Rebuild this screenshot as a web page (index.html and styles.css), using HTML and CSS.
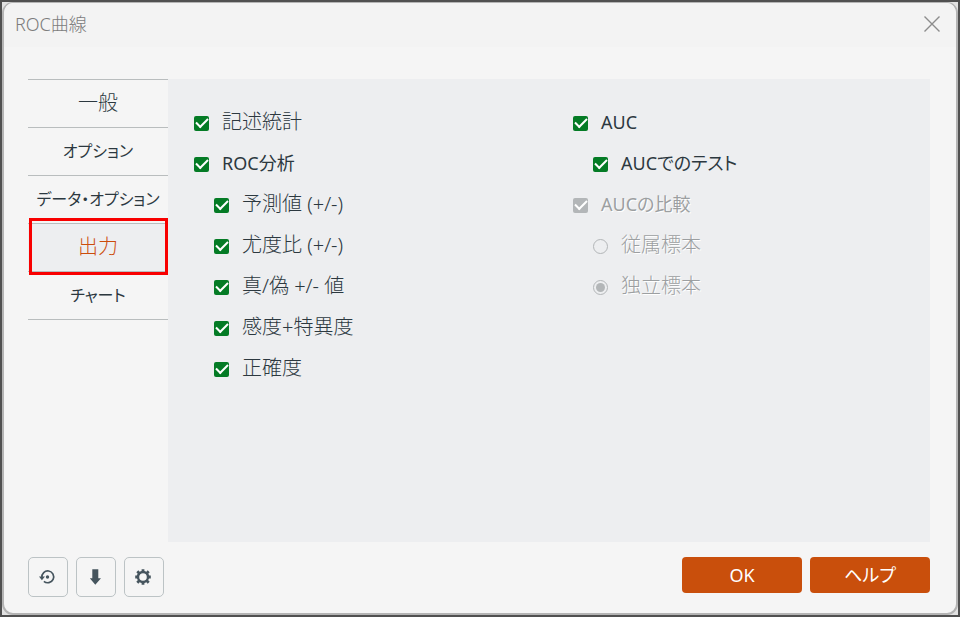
FILE: index.html
```html
<!DOCTYPE html>
<html lang="ja">
<head>
  <meta charset="UTF-8">
  <title>ROC曲線</title>
  <link rel="stylesheet" href="styles.css">
</head>
<body>
  <div class="dialog">
    <header class="titlebar">
      <h1>ROC曲線</h1>
      <button class="close" aria-label="閉じる">
        <svg width="16" height="16" viewBox="0 0 16 16"><path d="M0.5 0.5L15.5 15.5M15.5 0.5L0.5 15.5" stroke="#8c8c8c" stroke-width="1.4"/></svg>
      </button>
    </header>

    <main class="content">
      <nav class="tabs">
        <button class="tab">一般</button>
        <button class="tab kana">オプション</button>
        <button class="tab kana">データ・オプション</button>
        <button class="tab active">出力</button>
        <button class="tab kana">チャート</button>
      </nav>

      <section class="panel">
        <div class="column">
          <label class="option"><input type="checkbox" checked><span>記述統計</span></label>
          <label class="option mixed"><input type="checkbox" checked><span>ROC分析</span></label>
          <label class="option sub"><input type="checkbox" checked><span>予測値 (+/-)</span></label>
          <label class="option sub"><input type="checkbox" checked><span>尤度比 (+/-)</span></label>
          <label class="option sub"><input type="checkbox" checked><span>真/偽 +/- 値</span></label>
          <label class="option sub"><input type="checkbox" checked><span>感度+特異度</span></label>
          <label class="option sub"><input type="checkbox" checked><span>正確度</span></label>
        </div>
        <div class="column">
          <label class="option mixed"><input type="checkbox" checked><span>AUC</span></label>
          <label class="option mixed sub"><input type="checkbox" checked><span>AUCでのテスト</span></label>
          <label class="option mixed disabled"><input type="checkbox" checked disabled><span>AUCの比較</span></label>
          <label class="option sub disabled"><input type="radio" name="sample" disabled><span>従属標本</span></label>
          <label class="option sub disabled"><input type="radio" name="sample" checked disabled><span>独立標本</span></label>
        </div>
      </section>
    </main>

    <footer class="footer">
      <div class="tools">
        <button class="tool" aria-label="リセット">
          <svg width="18" height="18" viewBox="0 0 18 18">
            <path d="M2.9 9.5A5.9 5.9 0 1 1 4.9 13.3" fill="none" stroke="#46555e" stroke-width="1.7"/>
            <path d="M0 8.6H6L2.9 12.2Z" fill="#46555e"/>
            <circle cx="8.5" cy="9" r="1.7" fill="#46555e"/>
          </svg>
        </button>
        <button class="tool" aria-label="保存">
          <svg width="18" height="18" viewBox="0 0 18 18"><path d="M5.3 1.3H11.3V10.3H14L8.3 16.8L2.8 10.3H5.3Z" fill="#46555e"/></svg>
        </button>
        <button class="tool" aria-label="設定">
          <svg width="18" height="18" viewBox="0 0 18 18">
            <circle cx="8" cy="9" r="5" fill="none" stroke="#46555e" stroke-width="2.4"/>
            <path d="M8 1.2V4M8 14V16.8M0.2 9H3M13 9H15.8M2.3 3.3L4.4 5.4M11.6 12.6L13.7 14.7M2.3 14.7L4.4 12.6M11.6 5.4L13.7 3.3" stroke="#46555e" stroke-width="2.8"/>
          </svg>
        </button>
      </div>
      <div class="actions">
        <button class="action">OK</button>
        <button class="action">ヘルプ</button>
      </div>
    </footer>
  </div>
</body>
</html>
```

FILE: styles.css
```css
* {
  box-sizing: border-box;
}

body {
  margin: 0;
  min-height: 100vh;
  display: flex;
  border: 2px solid #505050;
  background: #e2e2e2;
  color: #2c383f;
  font-family: "Noto Sans", "Noto Sans CJK JP", sans-serif;
  font-weight: 300;
  font-feature-settings: "palt";
}

button {
  padding: 0;
  border: none;
  background: none;
  color: inherit;
  font: inherit;
  font-feature-settings: inherit;
}

svg {
  display: block;
}

.dialog {
  flex: 1;
  display: flex;
  flex-direction: column;
  border: 1px solid #b4b4b4;
  border-width: 1px 2px 2px;
  border-radius: 11px;
  background: #f5f5f5;
  overflow: hidden;
}

.titlebar {
  height: 44px;
  padding: 0 16px 2px 11px;
  display: flex;
  align-items: center;
  justify-content: space-between;
  background: #f3f3f3;
}

.titlebar h1 {
  margin: 0;
  font-size: 18px;
  font-weight: inherit;
  line-height: 24px;
  color: #7c7c7c;
}

.content {
  flex: 1;
  display: flex;
  padding: 32px 26px 0 24px;
}

.tabs {
  width: 140px;
  display: flex;
  flex-direction: column;
}

.tab {
  position: relative;
  height: 48px;
  padding-bottom: 2px;
  border-top: 1px solid #b9bdbe;
  font-size: 20px;
  line-height: 24px;
}

.tab:last-child {
  height: 49px;
  border-bottom: 1px solid #b9bdbe;
}

.tab.kana {
  font-size: 16px;
  font-weight: 400;
}

.tab.active {
  background: #edeef0;
  color: #cc4c0c;
}

/* red frame around the current tab */
.tab.active::after {
  content: "";
  position: absolute;
  z-index: 1;
  inset: -6px 0 -4px 1px;
  border: 3px solid #f80000;
}

.panel {
  flex: 1;
  display: grid;
  grid-template-columns: 1fr 1fr;
  align-items: start;
  padding: 23px 0 0 26px;
  background: #edeef0;
}

.column {
  display: flex;
  flex-direction: column;
}

.column + .column {
  padding-left: 11px;
}

.option {
  height: 41px;
  display: flex;
  align-items: center;
  gap: 13px;
  font-size: 20px;
  line-height: 24px;
}

.option span {
  padding-bottom: 2px;
}

.option.mixed {
  font-size: 18px;
  font-weight: 400;
}

.option.sub {
  padding-left: 20px;
}

.option input {
  appearance: none;
  width: 15px;
  height: 15px;
  margin: 1px 0 0;
  display: grid;
  place-items: center;
}

.option input[type="checkbox"] {
  border-radius: 2px;
  background: #047b25;
}

.option input[type="checkbox"]::before {
  content: "";
  width: 10px;
  height: 5px;
  margin-bottom: 4px;
  border: solid #fff;
  border-width: 0 0 2px 2px;
  transform: rotate(-45deg);
}

.option input[type="checkbox"]:disabled {
  background: #b3b6b8;
}

.option input[type="radio"] {
  border: 1px solid #b3b6b8;
  border-radius: 50%;
}

.option input[type="radio"]:checked::before {
  content: "";
  width: 9px;
  height: 9px;
  border-radius: 50%;
  background: #b3b6b8;
}

.option.disabled {
  color: #9c9fa1;
  text-shadow: 1px 1px 0 #fff;
}

.footer {
  display: flex;
  justify-content: space-between;
  align-items: flex-start;
  padding: 15px 26px 16px 24px;
}

.tools,
.actions {
  display: flex;
  gap: 8px;
}

.tool {
  width: 40px;
  height: 40px;
  display: grid;
  place-items: center;
  border: 1px solid #bcc3c5;
  border-radius: 5px;
}

.action {
  width: 120px;
  height: 36px;
  border-radius: 4px;
  background: #c94f0c;
  color: #fff;
  font-size: 18px;
  font-weight: 400;
  line-height: 24px;
}
```
